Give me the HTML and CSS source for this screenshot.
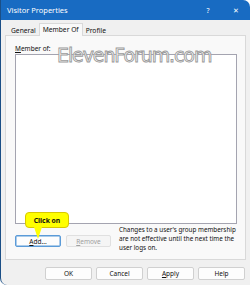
FILE: index.html
```html
<!DOCTYPE html>
<html>
<head>
<meta charset="utf-8">
<link rel="stylesheet" href="styles.css">
</head>
<body>
<div class="window">
  <div class="titlebar">
    <span class="title">Visitor Properties</span>
    <span class="tb-btns"><span class="tb-help">?</span><span class="tb-close">✕</span></span>
  </div>
  <div class="content">
    <div class="tabs">
      <div class="tab">General</div>
      <div class="tab active">Member Of</div>
      <div class="tab">Profile</div>
    </div>
    <div class="panel">
      <div class="label"><u>M</u>ember of:</div>
      <div class="list"></div>
      <div class="row">
        <div class="btn default"><u>A</u>dd...</div>
        <div class="btn disabled"><u>R</u>emove</div>
        <p class="note">Changes to a user's group membership are not effective until the next time the user logs on.</p>
      </div>
    </div>
    <div class="footer">
      <div class="btn fbtn">OK</div>
      <div class="btn fbtn">Cancel</div>
      <div class="btn fbtn"><u>A</u>pply</div>
      <div class="btn fbtn">Help</div>
    </div>
  </div>
  <div class="watermark">ElevenForum.com</div>
  <div class="callout">Click on</div>
</div>
</body>
</html>
```
FILE: styles.css
```css
* { box-sizing: border-box; }
html, body { margin: 0; padding: 0; background: #ffffff; }
body { width: 250px; height: 285px; overflow: hidden; font-family: "Noto Sans", "Open Sans", sans-serif; }
.window {
  position: relative;
  width: 250px; height: 285px;
  background: #f0f0f0;
  border-left: 1px solid #1b4f86;
  border-radius: 0 7px 0 7px;
  overflow: hidden;
  display: flex; flex-direction: column;
}
.titlebar {
  height: 20px; background: #186bc2; color: #fff;
  display: flex; align-items: center; justify-content: space-between;
  padding: 0 0 0 6px;
}
.title { font-size: 7.5px; }
.tb-btns { display: flex; align-items: center; }
.tb-help { font-size: 7px; width: 28px; text-align: center; }
.tb-close { font-size: 7px; width: 28px; text-align: center; }
.content { flex: 1; display: flex; flex-direction: column; padding: 4px 4px 0 4px; }
.tabs { display: flex; height: 11px; padding-left: 3px; position: relative; z-index: 1; }
.tab { font-size: 6.7px; color: #111; padding: 0 3px; line-height: 11px; height: 11px; margin-top: 1px; }
.tab.active { background: #f9f9f9; border: 1px solid #d9d9d9; border-bottom: none; height: 13px; margin-top: -1px; line-height: 11px; padding: 0 3px; }
.panel {
  height: 225px; background: #f9f9f9; border: 1px solid #d9d9d9;
  padding: 8px 8px 0 9px; display: flex; flex-direction: column;
}
.label { font-size: 6.5px; color: #111; line-height: 9px; height: 10px; }
.label u, .btn u { text-decoration: underline; }
.list { height: 170px; background: #fff; border: 1px solid #a4a4b0; }
.row { display: flex; align-items: flex-start; }
.btn {
  font-size: 6.5px; color: #111; background: #fdfdfd; border: 1px solid #d0d0d0;
  border-radius: 2px; display: flex; align-items: center; justify-content: center;
  height: 12px; width: 46px;
}
.row .btn { margin-top: 11px; }
.btn.default { border-color: #5b9bd8; box-shadow: inset 0 0 0 0.5px #5b9bd8; }
.btn.disabled { color: #a0a0a0; background: #f5f5f5; border-color: #e0e0e0; margin-left: 5px; width: 45px; }
.note { margin: 2px 0 0 8px; font-size: 6.3px; line-height: 8.8px; color: #111; width: 118px; }
.footer { display: flex; justify-content: flex-end; gap: 4px; padding: 7px 1px 0 0; }
.fbtn { width: 47px; height: 13px; }
.watermark {
  position: absolute; left: 56px; top: 44px;
  font-family: "DejaVu Sans", sans-serif; font-size: 19px; letter-spacing: -1.1px;
  color: #fff; -webkit-text-stroke: 0.9px #9a9a9a; white-space: nowrap;
}
.callout {
  position: absolute; left: 24px; top: 212px; width: 44px; height: 16px;
  background: #ffff00; border: 1px solid #d8c800; border-radius: 4px;
  font-size: 6.8px; font-weight: bold; color: #111;
  display: flex; align-items: center; justify-content: center;
}
.callout::after {
  content: ""; position: absolute; left: 8px; top: 14px;
  border-left: 4px solid transparent; border-right: 4px solid transparent;
  border-top: 12px solid #ffff00;
}
```
